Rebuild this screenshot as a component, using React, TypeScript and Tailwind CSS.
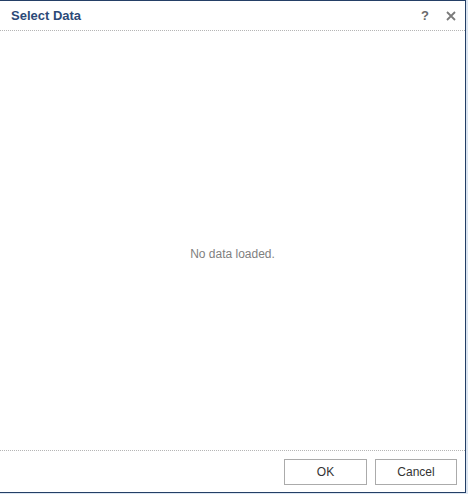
export default function App() {
  return (
    <div className="w-[468px] h-[494px] bg-[#dce6f2] overflow-hidden" style={{ fontFamily: '"Liberation Sans", Arial, sans-serif' }}>
      <div className="w-[466px] h-[493px] bg-white border-t border-r border-b border-[#243f66] flex flex-col">
        <div className="h-[30px] flex items-center justify-between pl-[11px] pr-[9px] border-b border-dotted border-[#b5b5b5]">
          <span className="text-[13px] font-bold text-[#2c4a78]">Select Data</span>
          <div className="flex items-center gap-[17px] text-[#6a6a6a]">
            <span className="text-[13px] font-bold">?</span>
            <svg width="10" height="10" viewBox="0 0 10 10">
              <path d="M1 1 L9 9 M9 1 L1 9" stroke="#7a7a7a" strokeWidth="1.8" />
            </svg>
          </div>
        </div>
        <div className="flex-1 flex items-center justify-center pt-[26px]">
          <span className="text-[12px] text-[#7f7f7f]">No data loaded.</span>
        </div>
        <div className="h-[42px] border-t border-dotted border-[#b5b5b5] flex items-start justify-end gap-[8px] pt-[8px] pr-[8px]">
          <button className="w-[83px] h-[26px] border border-[#ababab] bg-white text-[12px] text-[#333]">OK</button>
          <button className="w-[82px] h-[26px] border border-[#ababab] bg-white text-[12px] text-[#333]">Cancel</button>
        </div>
      </div>
    </div>
  );
}
